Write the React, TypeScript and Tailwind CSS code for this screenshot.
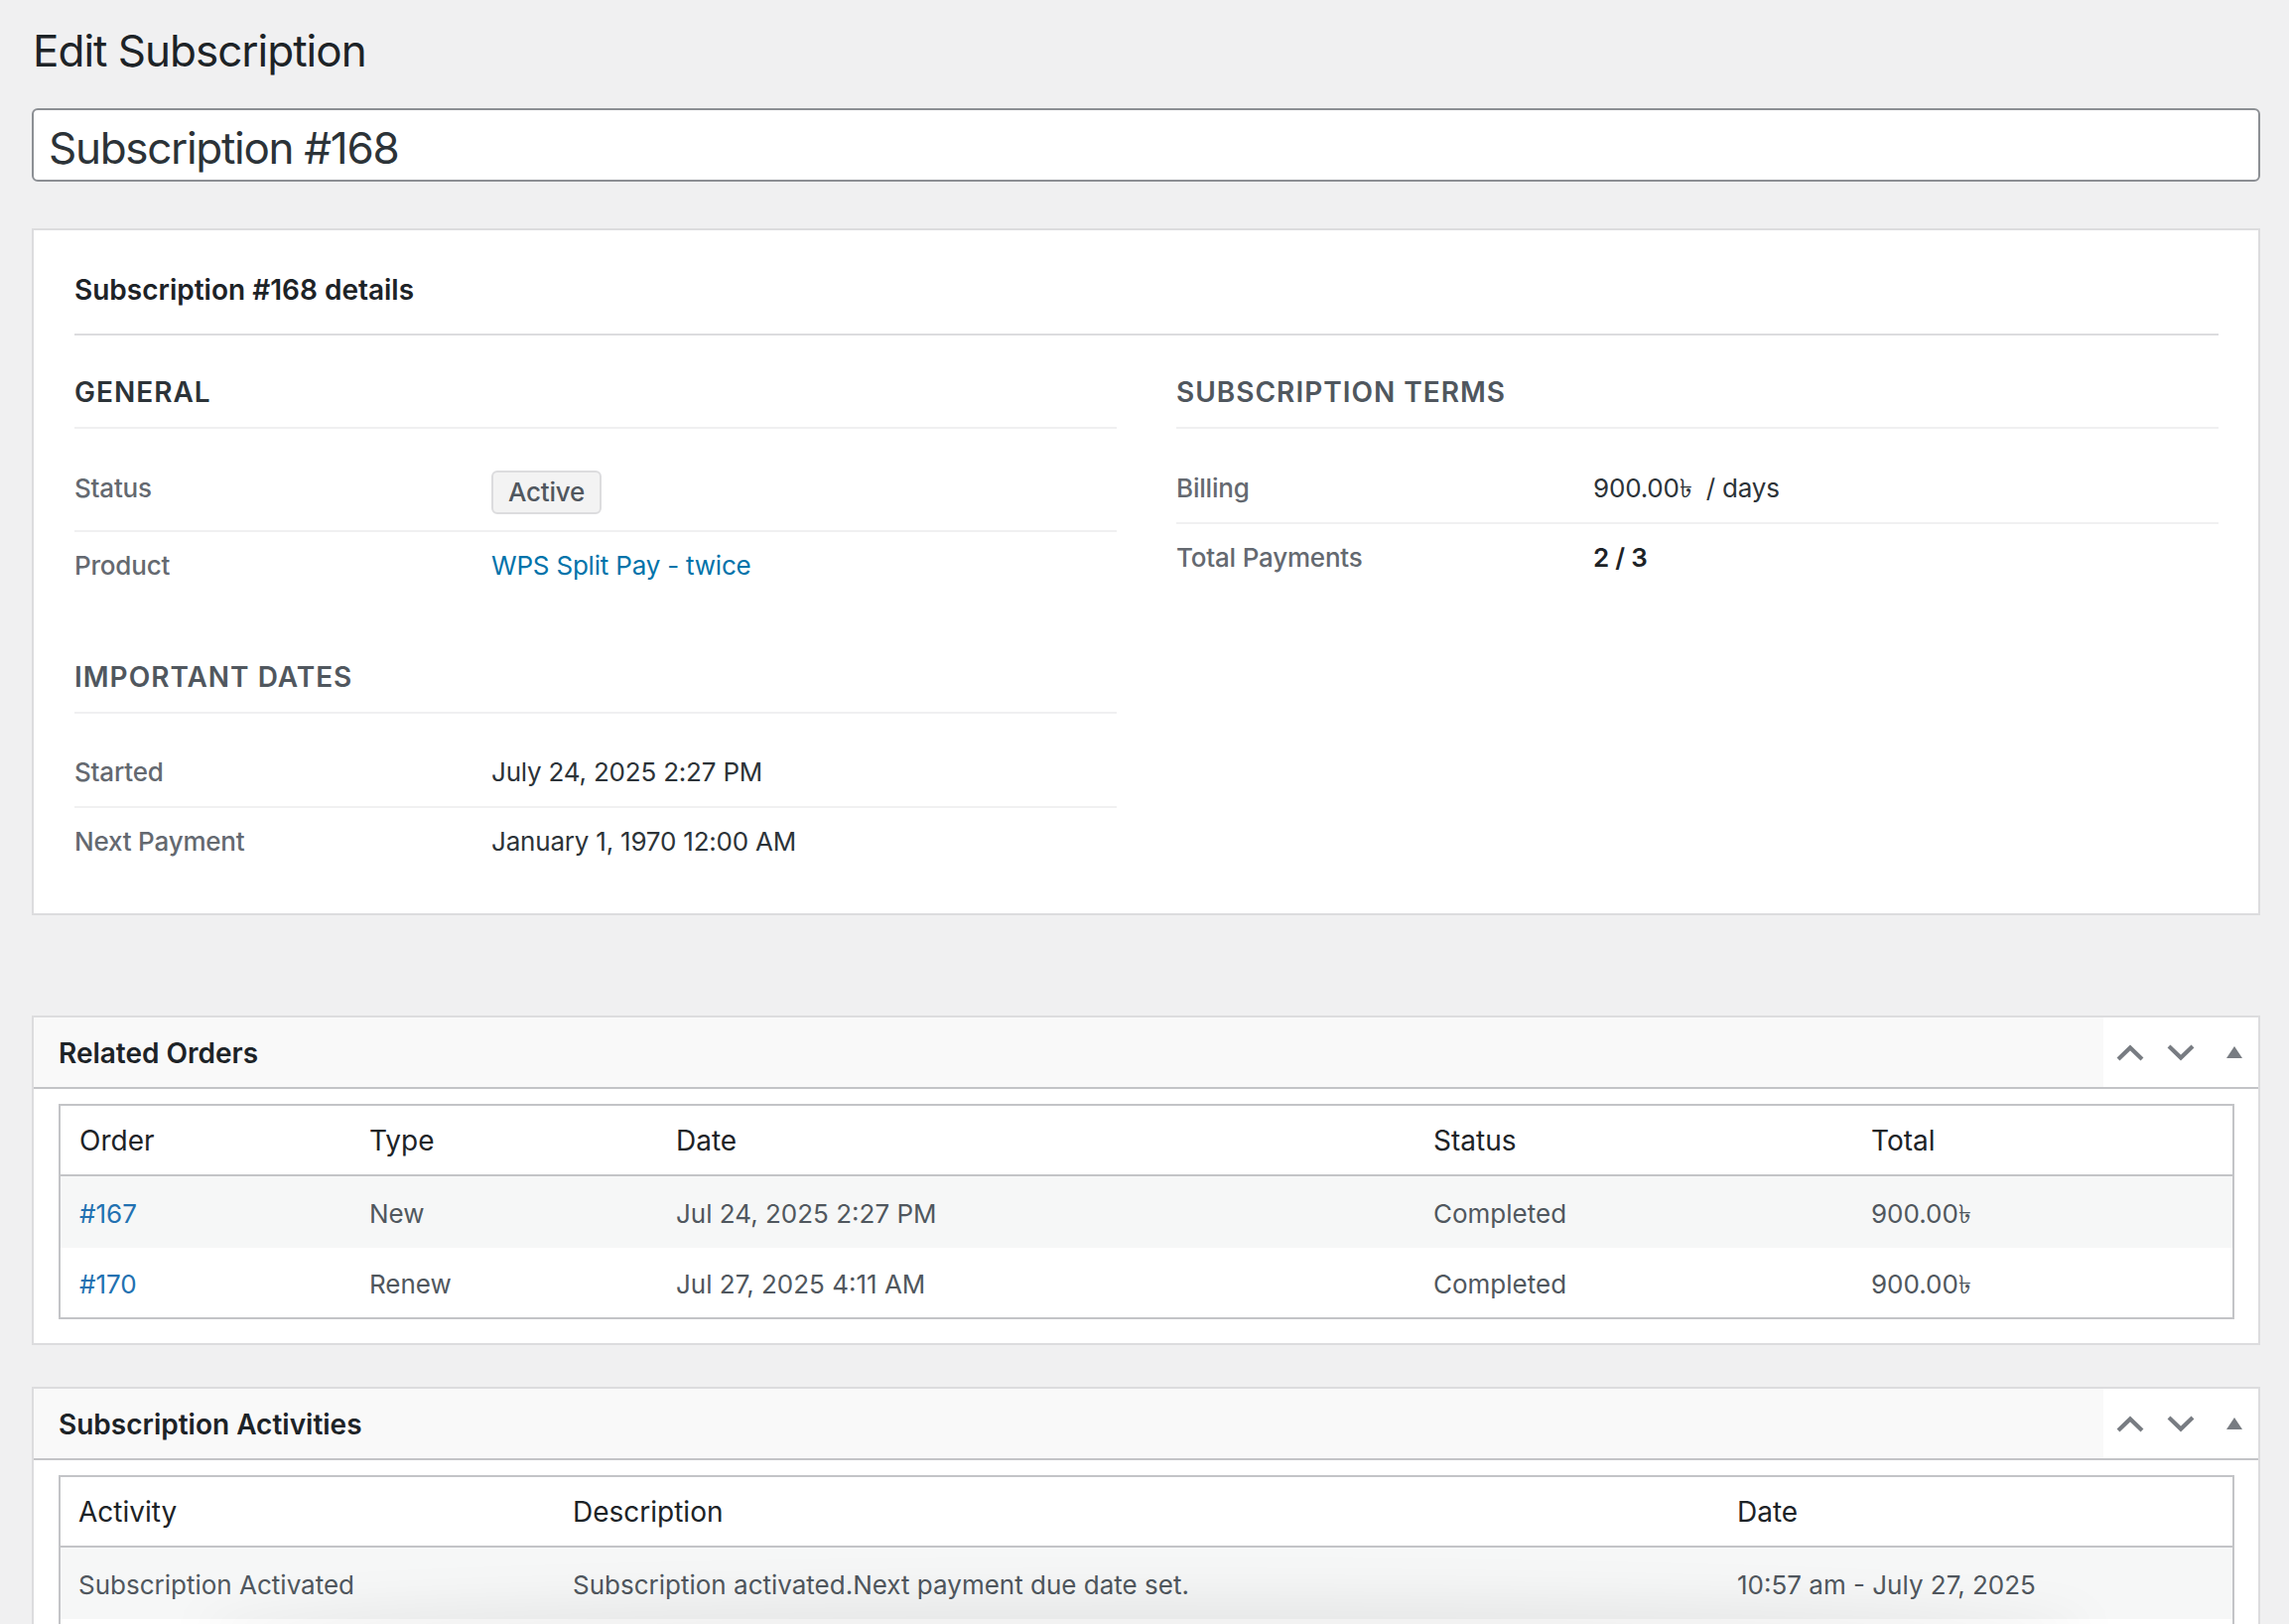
import React from "react";

function ChevronUp() {
  return (
    <svg width="28" height="17" viewBox="0 0 28 17" fill="none">
      <path d="M2 15 L14 3.5 L26 15" stroke="#787c82" strokeWidth="4.2" strokeLinecap="butt" strokeLinejoin="miter" />
    </svg>
  );
}
function ChevronDown() {
  return (
    <svg width="28" height="17" viewBox="0 0 28 17" fill="none">
      <path d="M2 2 L14 13.5 L26 2" stroke="#787c82" strokeWidth="4.2" strokeLinecap="butt" strokeLinejoin="miter" />
    </svg>
  );
}
function Triangle() {
  return (
    <svg width="16" height="12" viewBox="0 0 16 12">
      <polygon points="0,12 8,0 16,12" fill="#787c82" />
    </svg>
  );
}

function BoxHeader({ title }: { title: string }) {
  return (
    <div className="flex h-[72px] border-b-2 border-[#c3c4c7]">
      <div className="flex flex-1 items-center bg-[#f9f9f9] pl-[25px] pt-[2px] text-[28px] font-semibold text-[#1d2327]">
        {title}
      </div>
      <div className="flex bg-white">
        <div className="flex w-[52px] items-center justify-center pl-[2px]">
          <ChevronUp />
        </div>
        <div className="flex w-[52px] items-center justify-center">
          <ChevronDown />
        </div>
        <div className="flex w-[52px] items-center justify-center pl-[4px]">
          <Triangle />
        </div>
      </div>
    </div>
  );
}

function Row({ label, children }: { label: string; children: React.ReactNode }) {
  return (
    <div className="grid grid-cols-[420px_1fr] items-start border-b-2 border-[#f0f0f1] py-[16px] text-[26px] leading-[36px] tracking-[-0.2px] last:border-b-0">
      <div className="font-medium text-[#646970]">{label}</div>
      <div className="text-[#2c3338]">{children}</div>
    </div>
  );
}

function SectionHead({ title, dark }: { title: string; dark?: boolean }) {
  return (
    <h3
      className={
        "border-b-2 border-[#f0f0f1] pb-[17px] text-[28px] font-semibold uppercase leading-[36px] tracking-[1px] " +
        (dark ? "text-[#2c3338]" : "text-[#50575e]")
      }
    >
      {title}
    </h3>
  );
}

const TAKA = "\u09F3";

export default function App() {
  const orders = [
    { id: "#167", type: "New", date: "Jul 24, 2025 2:27 PM", status: "Completed", total: "900.00" + TAKA },
    { id: "#170", type: "Renew", date: "Jul 27, 2025 4:11 AM", status: "Completed", total: "900.00" + TAKA },
  ];
  return (
    <div className="relative h-[1636px] overflow-hidden bg-[#f0f0f1] pl-[32px] pr-[29px] font-['Inter','Noto_Sans',sans-serif] text-[#1d2327]">
      <h1 className="pl-[1px] pt-[21px] text-[44px] font-normal leading-[60px] tracking-[-1px] text-[#1d2327]">
        Edit Subscription
      </h1>

      <div className="mt-[28px] h-[74px] rounded-[6px] border-2 border-[#8c8f94] bg-white pl-[15px] pt-[6px] text-[44px] leading-[64px] tracking-[-1.3px] text-[#2c3338]">
        Subscription #168
      </div>

      <div className="mt-[47px] border-2 border-[#dcdcde] bg-white pb-[38px] pl-[41px] pr-[40px] pt-[42px]">
        <h2 className="border-b-2 border-[#dcdcde] pb-[26px] text-[28px] font-semibold leading-[36px] text-[#1d2327]">
          Subscription #168 details
        </h2>
        <div className="mt-[39px] grid grid-cols-2 gap-x-[60px]">
          <div>
            <SectionHead title="General" dark />
            <div className="mt-[26px]">
              <Row label="Status">
                <span className="inline-flex h-[44px] items-center rounded-[6px] border-2 border-[#dcdcde] bg-[#f3f3f3] px-[15px] font-medium text-[#50575e]">
                  Active
                </span>
              </Row>
              <Row label="Product">
                <a className="text-[#0073aa]">WPS Split Pay - twice</a>
              </Row>
            </div>
            <div className="mt-[60px]">
              <SectionHead title="Important Dates" />
              <div className="mt-[25px]">
                <Row label="Started">July 24, 2025 2:27 PM</Row>
                <Row label="Next Payment">January 1, 1970 12:00 AM</Row>
              </div>
            </div>
          </div>
          <div>
            <SectionHead title="Subscription Terms" />
            <div className="mt-[26px]">
              <Row label="Billing">
                <span>
                  900.00{TAKA}&nbsp; / days
                </span>
              </Row>
              <Row label="Total Payments">
                <span className="font-semibold text-[#1d2327]">2 / 3</span>
              </Row>
            </div>
          </div>
        </div>
      </div>

      <div className="mt-[101px] border-2 border-[#dcdcde] bg-white">
        <BoxHeader title="Related Orders" />
        <div className="pb-[24px] pl-[25px] pr-[24px] pt-[15px]">
          <div className="border-2 border-[#c3c4c7] leading-[40px]">
            <div className="grid h-[71px] grid-cols-[292px_309px_763px_441px_1fr] items-center border-b-2 border-[#c3c4c7] pl-[19px] pt-[1px] text-[28px] text-[#1d2327]">
              <div>Order</div>
              <div>Type</div>
              <div>Date</div>
              <div>Status</div>
              <div>Total</div>
            </div>
            {orders.map((o, i) => (
              <div
                key={o.id}
                className={
                  "grid grid-cols-[292px_309px_763px_441px_1fr] items-center pl-[19px] pt-[4px] text-[26px] text-[#50575e] " +
                  (i % 2 === 0 ? "h-[72px] bg-[#f6f7f7]" : "h-[70px] bg-white")
                }
              >
                <div>
                  <a className="text-[#2271b1]">{o.id}</a>
                </div>
                <div>{o.type}</div>
                <div>{o.date}</div>
                <div>{o.status}</div>
                <div>{o.total}</div>
              </div>
            ))}
          </div>
        </div>
      </div>

      <div className="mt-[42px] border-2 border-[#dcdcde] bg-white">
        <BoxHeader title="Subscription Activities" />
        <div className="pb-[24px] pl-[25px] pr-[24px] pt-[15px]">
          <div className="border-2 border-[#c3c4c7] leading-[40px]">
            <div className="grid h-[71px] grid-cols-[498px_1173px_1fr] items-center border-b-2 border-[#c3c4c7] pl-[18px] pt-[1px] text-[28px] text-[#1d2327]">
              <div>Activity</div>
              <div>Description</div>
              <div>Date</div>
            </div>
            <div className="grid h-[72px] grid-cols-[498px_1173px_1fr] items-center bg-[#f6f7f7] pl-[18px] pt-[4px] text-[26px] text-[#50575e]">
              <div>Subscription Activated</div>
              <div>Subscription activated.Next payment due date set.</div>
              <div>10:57 am - July 27, 2025</div>
            </div>
            <div className="h-[70px] bg-white" />
          </div>
        </div>
      </div>

      <div className="pointer-events-none absolute bottom-[-40px] left-[200px] right-[200px] h-[70px] rounded-[50%] bg-[#000000]/[0.06] blur-[22px]" />
    </div>
  );
}
